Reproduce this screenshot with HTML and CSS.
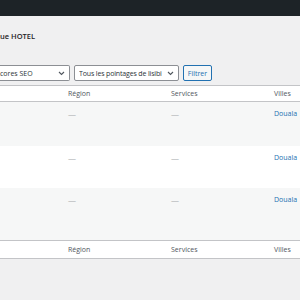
FILE: index.html
```html
<!doctype html>
<html lang="fr">
	<head>
		<meta charset="UTF-8">
		<title>HOTEL</title>
		<link rel="stylesheet" href="styles.css">
	</head>
	<body>
		<div class="topbar"></div>
		<div class="wrap">
			<h1 class="title">ue HOTEL</h1>
			<div class="filters">
				<div class="select first">
					<span class="label">cores SEO</span>
					<svg class="chev" width="7" height="5" viewBox="0 0 7 5"><path d="M1 1l2.5 2.5L6 1" fill="none" stroke="#50575e" stroke-width="1.1"/></svg>
				</div>
				<div class="select second">
					<span class="label">Tous les pointages de lisibi</span>
					<svg class="chev" width="7" height="5" viewBox="0 0 7 5"><path d="M1 1l2.5 2.5L6 1" fill="none" stroke="#50575e" stroke-width="1.1"/></svg>
				</div>
				<button class="btn">Filtrer</button>
			</div>
			<table class="list">
				<colgroup>
					<col class="c-title">
					<col class="c-data">
					<col class="c-data">
					<col class="c-last">
				</colgroup>
				<thead>
					<tr>
						<th></th>
						<th>Région</th>
						<th>Services</th>
						<th>Villes</th>
					</tr>
				</thead>
				<tbody>
					<tr class="alt r1">
						<td></td>
						<td><span class="dash">—</span></td>
						<td><span class="dash">—</span></td>
						<td><a href="#">Douala</a></td>
					</tr>
					<tr class="r2">
						<td></td>
						<td><span class="dash">—</span></td>
						<td><span class="dash">—</span></td>
						<td><a href="#">Douala</a></td>
					</tr>
					<tr class="alt r3">
						<td></td>
						<td><span class="dash">—</span></td>
						<td><span class="dash">—</span></td>
						<td><a href="#">Douala</a></td>
					</tr>
				</tbody>
				<tfoot>
					<tr>
						<th></th>
						<th>Région</th>
						<th>Services</th>
						<th>Villes</th>
					</tr>
				</tfoot>
			</table>
		</div>
	</body>
</html>
```

FILE: styles.css
```css
html,body,div,h1,table,th,td {
	margin: 0;
	padding: 0;
	box-sizing: border-box;
}
body {
	background-color: #f0f0f1;
	font-family: "Open Sans", "Noto Sans", sans-serif;
	font-size: 7px;
	color: #3c434a;
	overflow: hidden;
	height: 300px;
}
.topbar {
	height: 16px;
	background-color: #1d2327;
}
.title {
	margin-top: 15px;
	font-size: 7.5px;
	line-height: 10px;
	font-weight: 600;
	color: #1d2327;
}
.filters {
	display: flex;
	gap: 4px;
	margin-top: 24px;
	height: 16px;
}
.select {
	display: flex;
	align-items: center;
	justify-content: space-between;
	height: 16px;
	background-color: #fff;
	border: 1px solid #8c8f94;
	border-radius: 2px;
	padding: 0 4px 0 4px;
	color: #2c3338;
	overflow: hidden;
	white-space: nowrap;
}
.select.first {
	width: 70px;
	padding-left: 0;
	border-left: none;
	border-radius: 0 2px 2px 0;
}
.select.second {
	width: 105px;
}
.select .label {
	overflow: hidden;
	flex: 1;
}
.select.second .label {
	letter-spacing: -0.15px;
}
.chev {
	flex: none;
	margin-left: 2px;
}
.btn {
	height: 16px;
	width: 29px;
	padding: 0;
	background-color: #f6f7f7;
	border: 1px solid #2271b1;
	border-radius: 2px;
	color: #2271b1;
	font-family: inherit;
	font-size: 7px;
}
.list {
	margin-top: 4px;
	width: 300px;
	table-layout: fixed;
	border-collapse: separate;
	border-spacing: 0;
	background-color: #fff;
	border-top: 1px solid #c3c4c7;
	border-bottom: 1px solid #c3c4c7;
}
.c-title {
	width: 60px;
}
.c-data {
	width: 103px;
}
.c-last {
	width: 34px;
}
.list th {
	height: 16px;
	padding: 0 0 0 8px;
	text-align: left;
	font-weight: 400;
	color: #50575e;
	line-height: 10px;
	white-space: nowrap;
}
.list thead th {
	border-bottom: 1px solid #c3c4c7;
}
.list tfoot th {
	border-top: 1px solid #c3c4c7;
	height: 18px;
}
.list td {
	vertical-align: top;
	padding: 7px 0 0 8px;
	line-height: 10px;
	white-space: nowrap;
}
.list tr.alt td {
	background-color: #f6f7f7;
}
.r1 td {
	height: 44px;
}
.r2 td {
	height: 42px;
}
.r3 td {
	height: 52px;
}
.dash {
	color: #a7aaad;
	font-size: 8px;
}
.list a {
	color: #2271b1;
	text-decoration: none;
}
```
